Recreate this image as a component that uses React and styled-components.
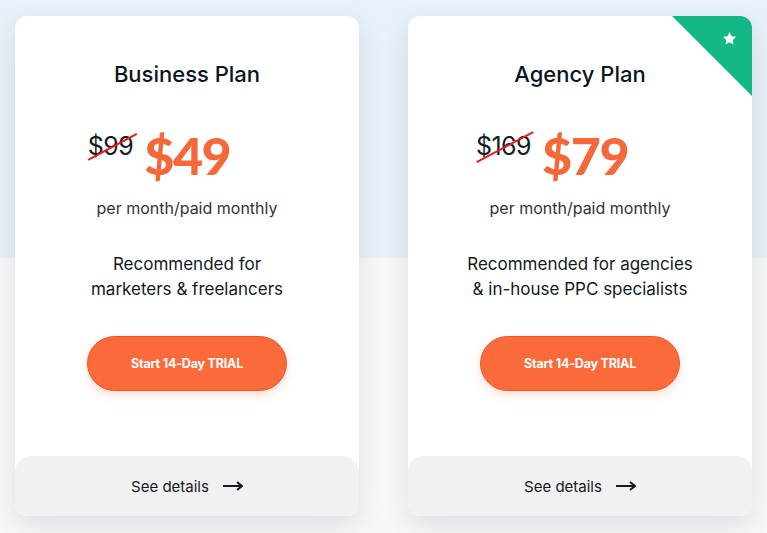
import React from "react";
import styled, { createGlobalStyle } from "styled-components";

const GlobalStyle = createGlobalStyle`
  html, body {
    margin: 0;
    padding: 0;
  }
  body {
    font-family: "Inter", "Noto Sans", sans-serif;
    background: #f8f8f8;
  }
`;

const Page = styled.div`
  width: 767px;
  height: 533px;
  overflow: hidden;
  background: linear-gradient(#e9f1f9 0, #e9f1f9 258px, #f8f8f8 258px);
`;

const Row = styled.div`
  display: flex;
  gap: 49px;
  padding: 16px 0 0 15px;
`;

const Card = styled.div`
  position: relative;
  width: 344px;
  height: 500px;
  background: #fff;
  border-radius: 12px;
  box-shadow: 0 10px 28px rgba(40, 60, 90, 0.13);
  display: flex;
  flex-direction: column;
  align-items: center;
  overflow: hidden;
`;

const Ribbon = styled.div`
  position: absolute;
  top: 0;
  right: 0;
  width: 80px;
  height: 80px;
  background: #12b886;
  clip-path: polygon(0 0, 100% 0, 100% 100%);
  display: flex;
  justify-content: flex-end;
  padding: 15px 15px 0 0;
  box-sizing: border-box;
`;

const Title = styled.h2`
  margin: 43px 0 0;
  font-size: 22px;
  line-height: 30px;
  font-weight: 500;
  color: #0c1522;
`;

const PriceRow = styled.div`
  display: flex;
  align-items: flex-start;
  gap: 11px;
  margin: 38px 56px 0 0;
`;

const OldPrice = styled.span`
  position: relative;
  font-size: 25px;
  line-height: 24px;
  letter-spacing: -0.5px;
  color: #141b26;
  margin-top: 7px;

  &::after {
    content: "";
    position: absolute;
    left: -3px;
    right: -6px;
    top: 52%;
    height: 2px;
    background: #e01e1e;
    transform: rotate(-28deg);
  }
`;

const NewPrice = styled.span`
  font-family: "Lato", "Inter", sans-serif;
  font-size: 52px;
  line-height: 56px;
  font-weight: 900;
  letter-spacing: -1.5px;
  color: #f4683a;
`;

const Period = styled.p`
  margin: 15px 0 0;
  font-size: 16px;
  line-height: 20px;
  color: #333;
`;

const Recommend = styled.p`
  margin: 34px 0 0;
  font-size: 17px;
  line-height: 25px;
  color: #121a24;
  text-align: center;
`;

const TrialButton = styled.button`
  margin-top: 34px;
  width: 200px;
  height: 55px;
  border: 1px solid #e8582a;
  border-radius: 28px;
  background: #fb6a3a;
  color: #fff;
  font-family: inherit;
  font-size: 12.5px;
  font-weight: 700;
  letter-spacing: -0.2px;
  box-shadow: 0 4px 10px rgba(240, 100, 50, 0.22);
  cursor: pointer;
`;

const Footer = styled.div`
  margin-top: auto;
  align-self: stretch;
  height: 60px;
  background: #f1f1f1;
  border-radius: 16px 16px 12px 12px;
  display: flex;
  align-items: center;
  justify-content: center;
  gap: 14px;
  font-size: 15px;
  color: #141b26;
`;

const Arrow = () => (
  <svg width="20" height="10" viewBox="0 0 20 10">
    <path d="M0 5h18" stroke="#141b26" strokeWidth="2" />
    <path d="M14 1l5 4-5 4" fill="none" stroke="#141b26" strokeWidth="2" />
  </svg>
);

const Star = () => (
  <svg width="15" height="15" viewBox="0 0 24 24">
    <path
      d="M12 1.5l3.2 6.8 7.3.9-5.4 5.1 1.4 7.3L12 18l-6.5 3.6 1.4-7.3L1.5 9.2l7.3-.9z"
      fill="#fff"
    />
  </svg>
);

const plans = [
  {
    name: "Business Plan",
    oldPrice: "$99",
    price: "$49",
    lines: ["Recommended for", "marketers & freelancers"],
  },
  {
    name: "Agency Plan",
    oldPrice: "$169",
    price: "$79",
    lines: ["Recommended for agencies", "& in-house PPC specialists"],
    featured: true,
  },
];

export default function App() {
  return (
    <>
      <GlobalStyle />
      <Page>
        <Row>
          {plans.map((plan) => (
            <Card key={plan.name}>
              {plan.featured && (
                <Ribbon>
                  <Star />
                </Ribbon>
              )}
              <Title>{plan.name}</Title>
              <PriceRow>
                <OldPrice>{plan.oldPrice}</OldPrice>
                <NewPrice>{plan.price}</NewPrice>
              </PriceRow>
              <Period>per month/paid monthly</Period>
              <Recommend>
                {plan.lines[0]}
                <br />
                {plan.lines[1]}
              </Recommend>
              <TrialButton>Start 14-Day TRIAL</TrialButton>
              <Footer>
                See details
                <Arrow />
              </Footer>
            </Card>
          ))}
        </Row>
      </Page>
    </>
  );
}
